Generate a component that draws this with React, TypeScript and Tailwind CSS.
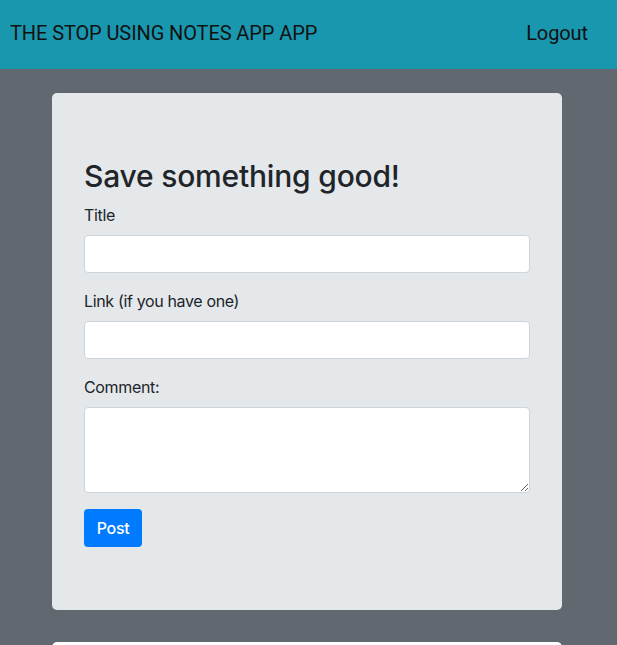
export default function App() {
  return (
    <div className="min-h-[645px] bg-[#626870] font-['Inter','Liberation_Sans',sans-serif] text-[#212529]">
      <nav className="flex h-[69px] items-center justify-between bg-[#1997ae] pb-[3px] pl-[10px] pr-[29px] font-['Roboto',sans-serif] text-[20px] tracking-[-0.1px] text-[#111]">
        <span>THE STOP USING NOTES APP APP</span>
        <span>Logout</span>
      </nav>

      <div className="pl-[52px] pr-[55px] pt-[24px]">
        <div className="rounded-[5px] bg-[#e4e8eb] px-8 pt-16 pb-[63px]">
          <h2 className="mb-2 text-[30px] leading-[38px] font-medium tracking-[-0.2px]">Save something good!</h2>
          <form className="flex flex-col tracking-[-0.35px]">
            <div className="mb-4">
              <label className="mb-2 block text-[16px] leading-6">Title</label>
              <input className="block h-[38px] w-full rounded border border-[#ced4da] bg-white px-3" />
            </div>
            <div className="mb-4">
              <label className="mb-2 block text-[16px] leading-6">Link (if you have one)</label>
              <input className="block h-[38px] w-full rounded border border-[#ced4da] bg-white px-3" />
            </div>
            <div className="mb-4">
              <label className="mb-2 block text-[16px] leading-6">Comment:</label>
              <textarea rows={3} className="block h-[86px] w-full rounded border border-[#ced4da] bg-white px-3 py-1.5" />
            </div>
            <div>
              <button type="button" className="h-[38px] w-[58px] rounded bg-[#007bff] text-[16px] font-medium text-white">
                Post
              </button>
            </div>
          </form>
        </div>
        <div className="mt-8 h-4 rounded-t-[5px] bg-white" />
      </div>
    </div>
  )
}
